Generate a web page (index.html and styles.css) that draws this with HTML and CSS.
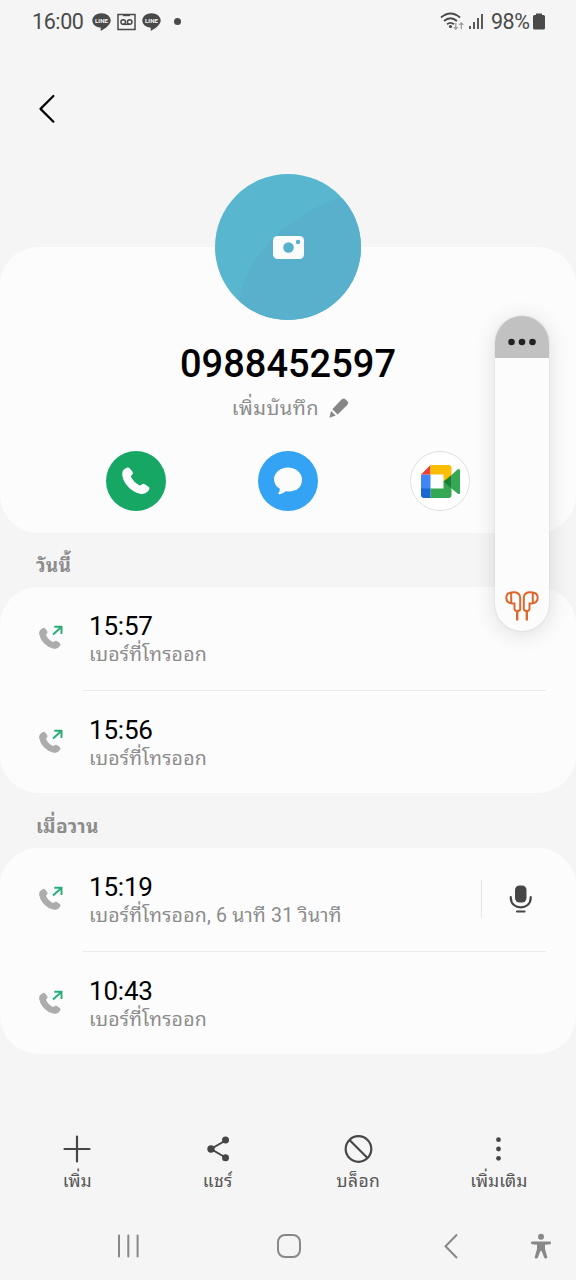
FILE: index.html
```html
<!DOCTYPE html>
<html lang="th">
<head>
<meta charset="utf-8">
<title>0988452597</title>
<link rel="stylesheet" href="styles.css">
</head>
<body>
<svg class="defs" width="0" height="0">
  <symbol id="handset" viewBox="0 0 28 28"><path stroke="currentColor" stroke-width="1.300" stroke-linejoin="round" fill="currentColor" d="M3.200 2.400 5 1.400Q6.300.6 7.300 1.800L9.800 5Q10.700 6.200 9.700 7.200L8.600 8.500Q8 9.400 8.500 10.400C10 13.500 13.500 17 17 18.900Q18 19.400 18.900 18.700L20.400 17.800Q21.600 17 22.800 17.900L26 20.200Q27.200 21.200 26.400 22.500L25.200 24.100C23.700 26 21.300 26.700 18 26C9.500 24 2.200 16.300 1 8.700C.6 5.700 1.300 3.500 3.200 2.400Z"/></symbol>
  <symbol id="outgoing" viewBox="0 0 24 24"><svg x="0" y="2.500" width="22" height="22" viewBox="0 0 28 28" color="#acacac"><use href="#handset"/></svg><path d="M14 9.500 22.300 2M15.300 1.800H22.500V9" fill="none" stroke="#27ae76" stroke-width="1.900"/></symbol>
</svg>
<div class="screen">
  <header class="status">
    <span class="clock">16:00</span>
    <svg class="line-icon" width="19" height="18" viewBox="0 0 19 18"><path d="M9.500.3C4.400.3.300 3.500.300 7.500c0 3.600 3.200 6.500 7.700 7 1 .2.900.8.700 2.700-.1.500.3.600.8.300 2.600-1.500 9.200-5.400 9.200-10C18.700 3.500 14.600.3 9.500.3Z" fill="#4a4a4a"/><text x="9.500" y="9.700" text-anchor="middle" textLength="13" lengthAdjust="spacingAndGlyphs" class="line-text">LINE</text></svg>
    <svg class="tape" width="19" height="18" viewBox="0 0 19 18" fill="none" stroke="#4a4a4a" stroke-width="1.500"><path d="M1 1.500H18V16.500H1Z"/><path d="M6 2.200H13" stroke-width="2"/><circle cx="6.200" cy="9" r="2.300"/><circle cx="12.700" cy="9" r="2.300"/><path d="M6 11.300H13"/></svg>
    <svg class="line-icon" width="19" height="18" viewBox="0 0 19 18"><path d="M9.500.3C4.400.3.300 3.500.300 7.500c0 3.600 3.200 6.500 7.700 7 1 .2.900.8.700 2.700-.1.500.3.600.8.300 2.600-1.500 9.200-5.400 9.200-10C18.700 3.500 14.600.3 9.500.3Z" fill="#4a4a4a"/><text x="9.500" y="9.700" text-anchor="middle" textLength="13" lengthAdjust="spacingAndGlyphs" class="line-text">LINE</text></svg>
    <i class="more-dot"></i>
    <svg class="signals" width="46" height="20" viewBox="0 0 46 20" fill="none" stroke="#4a4a4a" stroke-width="1.800"><path d="M1 5.500Q10.500-2.500 20 5.500M4 9Q10.500 3.500 17 9M7 12.200Q10.500 9.500 14 12.200"/><circle cx="10.500" cy="14.500" r="1.600" fill="#4a4a4a" stroke="none"/><path d="M15.800 11V17M13.800 15.200 15.800 17.200 17.800 15.200M21.300 17V11M19.300 12.800 21.300 10.800 23.300 12.800" stroke="#999" stroke-width="1.200"/><path d="M30 14V17M34 10V17M38 6V17M42 2V17"/></svg>
    <span class="percent">98%</span>
    <svg class="battery" width="12" height="17" viewBox="0 0 12 17" fill="#4a4a4a"><path d="M3 .5H9V2H10.500Q12 2 12 3.500V15Q12 16.500 10.500 16.500H1.500Q0 16.500 0 15V3.500Q0 2 1.500 2H3Z"/></svg>
  </header>
  <nav class="back-bar"><svg width="18" height="30" viewBox="0 0 18 30" fill="none" stroke="#000" stroke-width="2.200" stroke-linecap="round" stroke-linejoin="round"><path d="M15.400 2 2.500 14.900 15.400 27.700"/></svg></nav>

  <section class="profile card">
    <svg class="avatar" width="146" height="146" viewBox="0 0 146 146"><defs><clipPath id="disc"><circle cx="73" cy="73" r="73"/></clipPath></defs><g clip-path="url(#disc)"><rect width="146" height="146" fill="#59b6cf"/><path d="M24 127C31 86 67 43 124 24H146V146H24Z" fill="#59b0cc"/></g><rect x="58" y="62" width="31" height="23" rx="4.500" fill="#fcfcfc"/><circle cx="73.500" cy="73.500" r="5.300" fill="#59b0cc"/><circle cx="83" cy="68" r="2.200" fill="#59b0cc"/></svg>
    <h1 class="number">0988452597</h1>
    <div class="note"><span class="note-text">เพิ่มบันทึก</span><svg width="20" height="20" viewBox="0 0 20 20" fill="#868686"><path d="M12.500 1.600 14 .7Q15 .2 16 1L18.700 3.600Q19.700 4.700 18.900 5.800L18 7.300 8.600 16.500 3.300 11.200ZM2 13 6.700 17.600.5 19.700Z"/></svg></div>
    <div class="actions">
      <span class="action call"><svg width="28" height="28"><use href="#handset"/></svg></span>
      <span class="action message"><svg width="30" height="28" viewBox="0 0 30 28" fill="#fcfcfc"><path d="M15 .5C7.200.5 1 5.700 1 12.300 1 16.300 3.200 19.600 6.800 21.800Q7.200 24.200 5.200 26.600Q5.500 27.400 6.500 27.200C9.200 26.700 11 25.800 12.700 24.300Q28.800 25.500 29 12.300C29 5.700 22.800.5 15 .5Z"/></svg></span>
      <span class="action meet"><svg width="39" height="33" viewBox="0 0 39 33"><path d="M0 9.500H9.500V24H0Z" fill="#4285f4"/><path d="M0 9.500 9.500 0V9.500Z" fill="#ea4335"/><path d="M9.500 0H27.500Q30.500 0 30.500 3V13.500L22.500 16.500V9.500H9.500Z" fill="#fbbc04"/><path d="M9.500 23.500H22.500V16.500L30.500 13V30Q30.500 33 27.500 33H9.500Z" fill="#34a853"/><path d="M0 23.500H9.500V33H3Q0 33 0 30Z" fill="#1967d2"/><path d="M30.500 10 36.500 4.500Q39 3 39 5.500V27.500Q39 30 36.500 28.500L30.500 23.500Z" fill="#34a853"/><path d="M22.500 16.500 30.500 10V23.500Z" fill="#188038"/></svg></span>
    </div>
  </section>

  <h2 class="day"><span class="today">วันนี้</span></h2>
  <section class="calls card">
    <article class="row"><svg class="kind" width="24" height="24"><use href="#outgoing"/></svg><div class="info"><time>15:57</time><p>เบอร์ที่โทรออก</p></div></article>
    <article class="row"><svg class="kind" width="24" height="24"><use href="#outgoing"/></svg><div class="info"><time>15:56</time><p>เบอร์ที่โทรออก</p></div></article>
  </section>
  <h2 class="day second"><span class="yesterday">เมื่อวาน</span></h2>
  <section class="calls card">
    <article class="row"><svg class="kind" width="24" height="24"><use href="#outgoing"/></svg><div class="info"><time>15:19</time><p>เบอร์ที่โทรออก, 6 นาที 31 วินาที</p></div>
      <span class="record"><svg width="24" height="29" viewBox="0 0 24 29" fill="none" stroke="#464646" stroke-width="2.200"><rect x="6" y=".5" width="11.500" height="17" rx="4.500" fill="#464646" stroke="none"/><path d="M1.800 12V13C1.800 25.500 21.700 25.500 21.700 13V12M8 26.500H15.500" stroke-linecap="round"/></svg></span></article>
    <article class="row"><svg class="kind" width="24" height="24"><use href="#outgoing"/></svg><div class="info"><time>10:43</time><p>เบอร์ที่โทรออก</p></div></article>
  </section>

  <nav class="tools">
    <div class="tool"><svg width="30" height="30" viewBox="0 0 30 30" stroke="#464646" stroke-width="2.200" stroke-linecap="round"><path d="M15 2.500V27.500M2.500 15H27.500"/></svg><span class="tool-text">เพิ่ม</span></div>
    <div class="tool"><svg width="30" height="30" viewBox="0 0 30 30" fill="#464646" stroke="#464646" stroke-width="2"><path d="M22.500 6.500 8 15 22.500 23.500" fill="none"/><g stroke="none"><circle cx="22.500" cy="6" r="3.500"/><circle cx="8" cy="15" r="3.700"/><circle cx="22.500" cy="23.700" r="3.500"/></g></svg><span class="tool-text share">แชร์</span></div>
    <div class="tool"><svg width="30" height="30" viewBox="0 0 30 30" fill="none" stroke="#464646" stroke-width="2.200"><circle cx="15.500" cy="15" r="12.800"/><path d="M6.500 6 24.500 24"/></svg><span class="tool-text block">บล็อก</span></div>
    <div class="tool"><svg width="30" height="30" viewBox="0 0 30 30" fill="#464646"><circle cx="14.500" cy="5.700" r="2.400"/><circle cx="14.500" cy="15" r="2.400"/><circle cx="14.500" cy="24.300" r="2.400"/></svg><span class="tool-text">เพิ่มเติม</span></div>
  </nav>
  <nav class="system">
    <svg width="24" height="26" viewBox="0 0 24 26" stroke="#888" stroke-width="2"><path d="M3 2.500V23.500M12.300 2.500V23.500M21.600 2.500V23.500" stroke-linecap="round"/></svg>
    <svg class="home" width="26" height="26" viewBox="0 0 26 26" fill="none" stroke="#888" stroke-width="2"><rect x="2" y="2" width="22" height="22" rx="7"/></svg>
    <svg class="sys-back" width="15" height="26" viewBox="0 0 15 26" fill="none" stroke="#888" stroke-width="2"><path d="M14 1.500 2.500 13.200 14 25"/></svg>
    <svg class="access" width="20" height="26" viewBox="0 0 20 26" fill="#888"><circle cx="10" cy="3.700" r="3"/><path d="M1 8.500H19Q20 8.500 20 9.800T19 11.200L14 11.800V16L16.400 24.500Q15.500 26.300 13.400 25L10.500 18H9.500L6.600 25Q4.500 26.300 3.600 24.500L6 16V11.800L1 11.200Q0 11 0 9.800T1 8.500Z"/></svg>
  </nav>
</div>
<aside class="edge-panel">
  <div class="grip"><svg width="30" height="8" viewBox="0 0 30 8" fill="#222"><circle cx="4.500" cy="4" r="3.300"/><circle cx="15" cy="4" r="3.300"/><circle cx="25.500" cy="4" r="3.300"/></svg></div>
  <svg width="34" height="30" viewBox="0 0 34 30" fill="none" stroke="#de672d" stroke-width="2" stroke-linecap="round"><path d="M12.200 20V28.500M21.800 20V28.500" stroke-width="2.400"/><path d="M9.500 18V12.500H7.500C-.8 12 .3 3 5 1.700Q7 1 9.500 1.200C13.500 1.500 15.200 4 15.200 7V18Q15.200 20 12.400 20T9.500 18ZM6.200 2V12M24.500 18V12.500H26.500C34.800 12 33.700 3 29 1.700Q27 1 24.500 1.200C20.500 1.500 18.800 4 18.800 7V18Q18.800 20 21.600 20T24.500 18ZM27.800 2V12"/></svg>
</aside>
</body>
</html>
```
FILE: styles.css
```css
* { box-sizing: border-box; }
body { margin: 0; width: 576px; height: 1280px; overflow: hidden; background: #f5f5f5; color: #000; font-family: Roboto, "Noto Sans Thai Looped", "Noto Looped Thai", "Droid Sans Thai", Loma, Waree, Garuda, "Noto Sans Thai", "Noto Sans", sans-serif; }
h1, h2, p { margin: 0; }
svg { display: block; flex: none; }
.defs { position: absolute; }
.screen { display: flex; flex-direction: column; height: 1280px; }
.card { background: #fcfcfc; border-radius: 38px; }

.status { height: 43px; display: flex; align-items: center; padding: 0 31px 0 32px; color: #4a4a4a; font-size: 21.500px; }
.clock { width: 60px; letter-spacing: -.4px; }
.tape { margin: 0 6px; }
.line-text { font: bold 6px Roboto, sans-serif; fill: #f5f5f5; }
.more-dot { width: 7px; height: 7px; margin-left: 13px; border-radius: 50%; background: #4a4a4a; }
.signals { margin-left: auto; }
.percent { width: 41px; margin-left: 5px; letter-spacing: -.5px; }
.battery { margin-left: 1px; }
.back-bar { height: 204px; padding: 51px 0 0 38px; }

.profile { height: 286px; display: flex; flex-direction: column; align-items: center; }
.avatar { margin-top: -73px; }
.number { height: 46px; margin-top: 21px; font-size: 38px; line-height: 46px; font-weight: 500; }
.note { height: 30px; margin-top: 6px; display: flex; align-items: center; gap: 10px; padding-left: 5px; color: #8c8c8c; font-size: 20px; line-height: 30px; }
.note-text { letter-spacing: .5px; }
.actions { width: 364px; margin-top: 28px; display: flex; justify-content: space-between; }
.action { width: 60px; height: 60px; border-radius: 50%; display: grid; place-items: center; }
.call { background: #17a765; color: #fcfcfc; }
.message { background: #34a3f4; }
.meet { background: #fff; border: 1px solid #e0e0e0; }

.day { height: 54px; padding: 19px 0 0 36px; font-size: 19px; line-height: 28px; color: #8c8c8c; }
.day.second { height: 55px; padding-top: 20px; }
.today, .yesterday { letter-spacing: .3px; }
.calls { height: 206px; }
.row { height: 104px; position: relative; display: flex; padding-left: 39px; }
.row + .row { height: 102px; }
.row + .row::before { content: ""; position: absolute; top: -1px; left: 83px; right: 30px; height: 1px; background: #ebebeb; }
.kind { margin-top: 38px; }
.info { margin-left: 26px; padding-top: 24px; }
time { display: block; font-size: 26px; line-height: 30px; letter-spacing: -.2px; }
.info p { font-size: 19.500px; line-height: 28px; letter-spacing: .2px; color: #8c8c8c; white-space: nowrap; }
.record { width: 95px; height: 38px; margin: 32px 0 0 auto; border-left: 1px solid #e6e6e6; padding: 5px 0 0 27px; }

.tools { height: 86px; margin-top: 80px; padding: 0 7px; display: grid; grid-template-columns: repeat(4, 140.500px); }
.tool { display: flex; flex-direction: column; align-items: center; color: #555; font-size: 17.500px; line-height: 28px; }
.tool-text { margin-top: 3px; }
.share, .block { letter-spacing: .4px; }
.system { height: 50px; display: flex; align-items: center; margin-top: 1px; padding-left: 116px; }
.home { margin-left: 136px; }
.sys-back { margin-left: 141px; }
.access { margin-left: 73px; }

.edge-panel { position: absolute; left: 495px; top: 316px; width: 54px; height: 315px; border-radius: 27px; background: #fcfcfc; overflow: hidden; box-shadow: 0 3px 22px rgba(0,0,0,.13), 0 0 2px rgba(0,0,0,.12); display: flex; flex-direction: column; align-items: center; justify-content: space-between; padding-bottom: 10px; }
.grip { width: 100%; height: 42px; padding-top: 10px; background: #c1c1c1; display: flex; align-items: center; justify-content: center; }
```
